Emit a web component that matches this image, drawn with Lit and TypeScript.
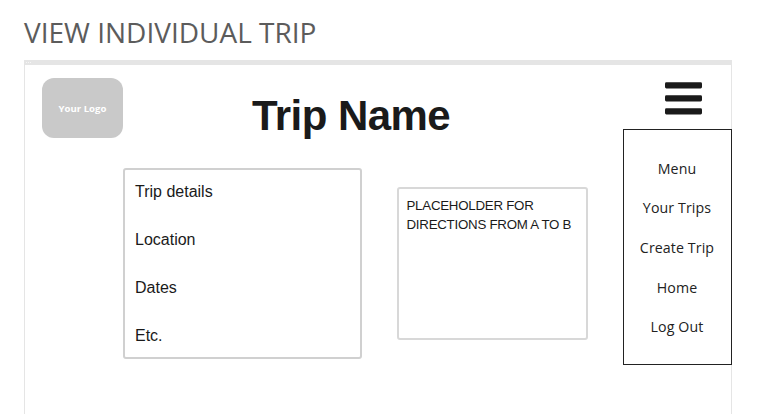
import { LitElement, html, css } from "lit";
import { customElement } from "lit/decorators.js";

@customElement("trip-menu")
class TripMenu extends LitElement {
  static styles = css`
    :host { display: flex; flex-direction: column; width: 109px; flex: none; margin-right: -1px; }
    .icon { display: block; width: 37px; height: 33px; margin: 17px 0 14px 42px; fill: #1a1a1a; }
    .list {
      box-sizing: border-box; height: 236px; margin: 0; padding: 19px 0 0; list-style: none;
      border: 1px solid #222; background: #fff;
      font: 14.2px/39.5px "Open Sans", sans-serif; letter-spacing: 0.1px; color: #222; text-align: center;
    }
    .item { margin-left: -1px; }
    .item:nth-child(2) { position: relative; top: -0.6px; }
  `;
  render() {
    return html`
      <svg class="icon" viewBox="0 0 37 33">
        <rect width="37" height="6.2" y="0.2" rx="1.4"></rect>
        <rect width="37" height="6.2" y="13.2" rx="1.4"></rect>
        <rect width="37" height="6.2" y="26.2" rx="1.4"></rect>
      </svg>
      <ul class="list">
        ${["Menu", "Your Trips", "Create Trip", "Home", "Log Out"].map((t) => html`<li class="item">${t}</li>`)}
      </ul>
    `;
  }
}

@customElement("app-root")
class AppRoot extends LitElement {
  static styles = css`
    :host { display: flex; flex-direction: column; height: 414px; overflow: hidden; background: #fff; color: #1a1a1a; }
    .heading { margin: 13px 0 9px 24px; font: 400 28px/38px "Open Sans", sans-serif; color: #5c5c5c; white-space: nowrap; }
    .frame { flex: 1; display: flex; flex-direction: column; width: 708px; margin-left: 24px; }
    .bar { display: flex; gap: 1px; height: 3px; padding: 2px 0 0 2px; background: #e5e5e5; }
    .dot { width: 1px; height: 1px; background: #f6f6f6; }
    .page { flex: 1; display: flex; border: solid #e5e5e5; border-width: 0 1px; }
    .content { flex: 1; }
    .header { display: flex; height: 103px; box-sizing: border-box; padding: 13px 0 0 17px; }
    .logo {
      box-sizing: border-box; width: 81px; height: 60px; padding-top: 1px;
      border-radius: 12px; background: #c9c9c9; color: #fff;
      display: flex; align-items: center; justify-content: center;
      font: 700 9.6px/12px "Open Sans", sans-serif;
    }
    .title { margin: 14px 0 0 129px; font: 700 42px/48px "Liberation Sans", Arial, sans-serif; letter-spacing: -0.55px; white-space: nowrap; }
    .cards { display: flex; align-items: flex-start; padding-left: 98px; gap: 35px; font-family: "Liberation Sans", Arial, sans-serif; }
    .card { box-sizing: border-box; border: 2px solid #d0d0d0; border-radius: 3px; }
    .details { width: 239px; height: 191px; padding-left: 10px; font-size: 16px; line-height: 48px; }
    .row { margin: 0; }
    .rows { margin-top: -2px; }
    .directions { width: 191px; height: 153px; margin-top: 19px; padding: 7px 0 0 7.5px; border-color: #d8d8d8; font-size: 13.3px; line-height: 19px; letter-spacing: -0.25px; white-space: nowrap; }
  `;
  render() {
    return html`
      <h1 class="heading">VIEW INDIVIDUAL TRIP</h1>
      <div class="frame">
        <div class="bar"><i class="dot"></i><i class="dot"></i><i class="dot"></i></div>
        <div class="page">
          <div class="content">
            <div class="header">
              <div class="logo">Your Logo</div>
              <h2 class="title">Trip Name</h2>
            </div>
            <div class="cards">
              <div class="card details">
                <div class="rows">
                  ${["Trip details", "Location", "Dates", "Etc."].map((t) => html`<p class="row">${t}</p>`)}
                </div>
              </div>
              <div class="card directions">PLACEHOLDER FOR<br />DIRECTIONS FROM A TO B</div>
            </div>
          </div>
          <trip-menu></trip-menu>
        </div>
      </div>
    `;
  }
}
